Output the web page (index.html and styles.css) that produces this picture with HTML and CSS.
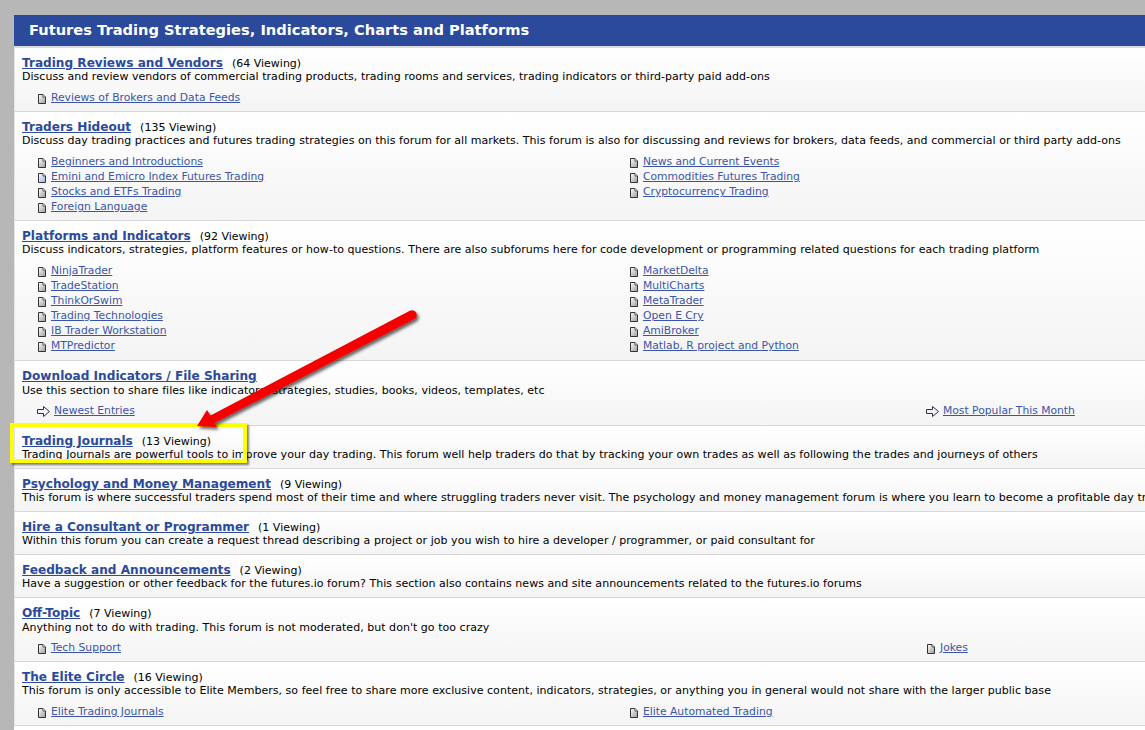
FILE: index.html
```html
<!DOCTYPE html>
<html lang="en">
<head>
<meta charset="utf-8">
<title>Futures Trading Strategies</title>
<link rel="stylesheet" href="styles.css">
</head>
<body>
<svg class="defs" width="0" height="0" aria-hidden="true">
  <defs>
    <linearGradient id="doc" x1="0" y1="0" x2="1" y2="1"><stop offset="0" stop-color="#ffffff"/><stop offset="1" stop-color="#9a9a9a"/></linearGradient>
    <linearGradient id="docb" x1="0" y1="0" x2="1" y2="1"><stop offset="0" stop-color="#ffffff"/><stop offset="1" stop-color="#8fb4ee"/></linearGradient>
    <symbol id="page" viewBox="0 0 8 10"><path d="M.5.5H5L7.5 3V9.5H.5Z" fill="url(#doc)" stroke="#333"/><path d="M5 .5V3H7.5" fill="#fff" stroke="#555"/></symbol>
    <symbol id="pageb" viewBox="0 0 8 10"><path d="M.5.5H5L7.5 3V9.5H.5Z" fill="url(#docb)" stroke="#333"/><path d="M5 .5V3H7.5" fill="#fff" stroke="#555"/></symbol>
    <symbol id="arr" viewBox="0 0 13 11"><path d="M.5 3.5H6.5V.5L12.5 5.5L6.5 10.5V7.5H.5Z" fill="#eef2fb" stroke="#333"/></symbol>
  </defs>
</svg>
<main class="panel">
  <h1 class="head">Futures Trading Strategies, Indicators, Charts and Platforms</h1>

  <section class="row">
    <div class="title"><a href="#">Trading Reviews and Vendors</a><span class="view">(64 Viewing)</span></div>
    <p class="desc">Discuss and review vendors of commercial trading products, trading rooms and services, trading indicators or third-party paid add-ons</p>
    <ul class="links"><li><svg class="ic"><use href="#page"/></svg><a href="#">Reviews of Brokers and Data Feeds</a></li></ul>
  </section>

  <section class="row">
    <div class="title"><a href="#">Traders Hideout</a><span class="view">(135 Viewing)</span></div>
    <p class="desc">Discuss day trading practices and futures trading strategies on this forum for all markets. This forum is also for discussing and reviews for brokers, data feeds, and commercial or third party add-ons</p>
    <ul class="links two">
      <li><svg class="ic"><use href="#page"/></svg><a href="#">Beginners and Introductions</a></li>
      <li><svg class="ic"><use href="#page"/></svg><a href="#">News and Current Events</a></li>
      <li><svg class="ic"><use href="#pageb"/></svg><a href="#">Emini and Emicro Index Futures Trading</a></li>
      <li><svg class="ic"><use href="#page"/></svg><a href="#">Commodities Futures Trading</a></li>
      <li><svg class="ic"><use href="#page"/></svg><a href="#">Stocks and ETFs Trading</a></li>
      <li><svg class="ic"><use href="#page"/></svg><a href="#">Cryptocurrency Trading</a></li>
      <li><svg class="ic"><use href="#page"/></svg><a href="#">Foreign Language</a></li>
    </ul>
  </section>

  <section class="row pad-extra">
    <div class="title"><a href="#">Platforms and Indicators</a><span class="view">(92 Viewing)</span></div>
    <p class="desc">Discuss indicators, strategies, platform features or how-to questions. There are also subforums here for code development or programming related questions for each trading platform</p>
    <ul class="links two">
      <li><svg class="ic"><use href="#page"/></svg><a href="#">NinjaTrader</a></li>
      <li><svg class="ic"><use href="#page"/></svg><a href="#">MarketDelta</a></li>
      <li><svg class="ic"><use href="#page"/></svg><a href="#">TradeStation</a></li>
      <li><svg class="ic"><use href="#page"/></svg><a href="#">MultiCharts</a></li>
      <li><svg class="ic"><use href="#page"/></svg><a href="#">ThinkOrSwim</a></li>
      <li><svg class="ic"><use href="#page"/></svg><a href="#">MetaTrader</a></li>
      <li><svg class="ic"><use href="#page"/></svg><a href="#">Trading Technologies</a></li>
      <li><svg class="ic"><use href="#page"/></svg><a href="#">Open E Cry</a></li>
      <li><svg class="ic"><use href="#page"/></svg><a href="#">IB Trader Workstation</a></li>
      <li><svg class="ic"><use href="#page"/></svg><a href="#">AmiBroker</a></li>
      <li><svg class="ic"><use href="#page"/></svg><a href="#">MTPredictor</a></li>
      <li><svg class="ic"><use href="#page"/></svg><a href="#">Matlab, R project and Python</a></li>
    </ul>
  </section>

  <section class="row pad-extra">
    <div class="title"><a href="#">Download Indicators / File Sharing</a></div>
    <p class="desc low">Use this section to share files like indicators, strategies, studies, books, videos, templates, etc</p>
    <ul class="links wide">
      <li><svg class="ic-arr"><use href="#arr"/></svg><a href="#">Newest Entries</a></li>
      <li><svg class="ic-arr"><use href="#arr"/></svg><a href="#">Most Popular This Month</a></li>
    </ul>
  </section>

  <section class="row">
    <div class="title"><a href="#">Trading Journals</a><span class="view">(13 Viewing)</span></div>
    <p class="desc">Trading Journals are powerful tools to improve your day trading. This forum well help traders do that by tracking your own trades as well as following the trades and journeys of others</p>
  </section>

  <section class="row">
    <div class="title"><a href="#">Psychology and Money Management</a><span class="view">(9 Viewing)</span></div>
    <p class="desc">This forum is where successful traders spend most of their time and where struggling traders never visit. The psychology and money management forum is where you learn to become a profitable day trader</p>
  </section>

  <section class="row">
    <div class="title"><a href="#">Hire a Consultant or Programmer</a><span class="view">(1 Viewing)</span></div>
    <p class="desc">Within this forum you can create a request thread describing a project or job you wish to hire a developer / programmer, or paid consultant for</p>
  </section>

  <section class="row">
    <div class="title"><a href="#">Feedback and Announcements</a><span class="view">(2 Viewing)</span></div>
    <p class="desc">Have a suggestion or other feedback for the futures.io forum? This section also contains news and site announcements related to the futures.io forums</p>
  </section>

  <section class="row">
    <div class="title"><a href="#">Off-Topic</a><span class="view">(7 Viewing)</span></div>
    <p class="desc low">Anything not to do with trading. This forum is not moderated, but don't go too crazy</p>
    <ul class="links wide">
      <li><svg class="ic"><use href="#page"/></svg><a href="#">Tech Support</a></li>
      <li><svg class="ic"><use href="#page"/></svg><a href="#">Jokes</a></li>
    </ul>
  </section>

  <section class="row">
    <div class="title"><a href="#">The Elite Circle</a><span class="view">(16 Viewing)</span></div>
    <p class="desc">This forum is only accessible to Elite Members, so feel free to share more exclusive content, indicators, strategies, or anything you in general would not share with the larger public base</p>
    <ul class="links two">
      <li><svg class="ic"><use href="#page"/></svg><a href="#">Elite Trading Journals</a></li>
      <li><svg class="ic"><use href="#page"/></svg><a href="#">Elite Automated Trading</a></li>
    </ul>
  </section>
</main>

<div class="callout"></div>
<svg class="pointer" width="1145" height="730" viewBox="0 0 1145 730" aria-hidden="true">
  <defs>
    <filter id="sh" x="-10%" y="-10%" width="120%" height="120%"><feDropShadow dx="2" dy="2.5" stdDeviation="1.5" flood-color="#000" flood-opacity=".6"/></filter>
  </defs>
  <path d="M409.8 310.8 A4.7 4.7 0 0 1 414.2 319.2 L214.5 423 L217 427 L197 426 L207 410 L210.5 415.5 Z" fill="#f40000" filter="url(#sh)"/>
</svg>
</body>
</html>
```
FILE: styles.css
```css
html, body { margin: 0; padding: 0; height: 730px; overflow: hidden; }
body { background: #b7b7b7; font-family: "DejaVu Sans", Verdana, sans-serif; font-size: 11px; color: #000; position: relative; }
.defs { position: absolute; }
.panel { margin: 15px 0 0 14px; background: #fff; overflow: hidden; min-height: 715px; }
.head { margin: 0; height: 31px; line-height: 30px; padding-left: 15px; background: #2b4a9b; color: #fff; font-size: 14.65px; font-weight: bold; white-space: nowrap; border-bottom: 2px solid #dcdcdc; }
.row { padding: 7px 0 6px 7px; border-bottom: 1px solid #d8d8d8; border-left: 1px solid #e4e4e4; background: linear-gradient(#ffffff, #f4f4f4); white-space: nowrap; }
.row.pad-extra { padding-bottom: 7px; }
.title { height: 15px; line-height: 17px; }
.title a { font-size: 12.1px; font-weight: bold; color: #2b4a9b; }
.view { margin-left: 9px; }
.desc { margin: 0; height: 14px; line-height: 14px; letter-spacing: .035px; overflow: visible; }
.desc.low { margin: 1px 0 -1px; }
.links { list-style: none; margin: 6px 0 0; padding: 0 0 0 15px; display: grid; grid-template-columns: 592px 1fr; }
.links.wide { grid-template-columns: 889px 1fr; }
.links li { height: 15px; line-height: 15px; display: flex; align-items: center; }
.links a { color: #3a55a8; font-size: 10.75px; }
.ic { width: 8px; height: 10px; margin: 3px 5px 0 1px; flex: none; }
.ic-arr { width: 13px; height: 11px; margin: 1px 4px 0 0; flex: none; }
.callout { position: absolute; left: 10px; top: 423px; width: 229px; height: 32px; border: 4px solid #ffff00; box-shadow: 2px 2px 2px rgba(0,0,0,.5); }
.pointer { position: absolute; left: 0; top: 0; pointer-events: none; }
```
